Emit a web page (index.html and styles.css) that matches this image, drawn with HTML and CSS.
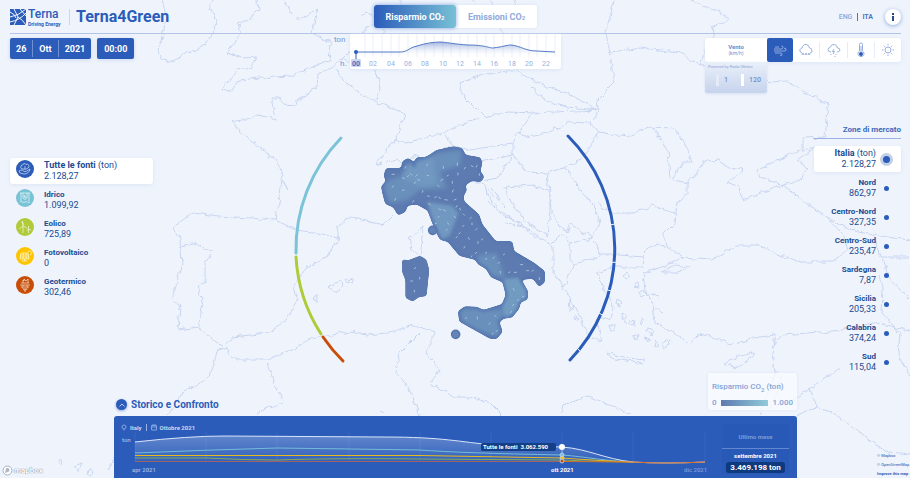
FILE: index.html
```html
<!DOCTYPE html>
<html lang="it">
<head>
<meta charset="utf-8">
<meta name="viewport" content="width=device-width, initial-scale=1">
<title>Terna4Green</title>
<link rel="stylesheet" href="styles.css">
</head>
<body>
<div class="app">
  <svg class="map" viewBox="0 0 910 478" preserveAspectRatio="xMidYMid slice" aria-hidden="true">
    <defs>
      <filter id="coast" x="0" y="0" width="910" height="478" filterUnits="userSpaceOnUse">
        <feTurbulence type="fractalNoise" baseFrequency="0.14" numOctaves="2" seed="4"/>
        <feDisplacementMap in="SourceGraphic" scale="6" xChannelSelector="R" yChannelSelector="G"/>
      </filter>
      <clipPath id="land"><use href="#italy"/></clipPath>
      <filter id="soft"><feGaussianBlur stdDeviation="5"/></filter>
      <filter id="round" color-interpolation-filters="sRGB"><feGaussianBlur stdDeviation="4"/><feComponentTransfer><feFuncA type="linear" slope="6" intercept="-2.5"/></feComponentTransfer></filter>
    </defs>
    <g class="coast" filter="url(#coast)">
      <path d="M162 0L167 18L163 32L162 43L158 48L163 60L172 62L187 53L203 47L213 33L217 20L210 5L213 0"/>
      <path d="M257 0L258 10L247 22L237 22L240 30L235 43L227 53L242 58L257 57L250 68L237 70L222 90L230 91L239 80L260 78L290 76L300 72L329 60L331 43L312 33L317 10L300 20L290 12L285 0"/>
      <path d="M400 0L400 10L405 20L385 17L366 27L351 50L341 60L327 70L318 75L317 87L298 100L297 105L282 104L279 98L272 98L276 119L257 115L250 118L232 122L238 130L253 142L267 152L280 167L282 177L288 190L282 180L279 203L275 220L250 218L218 216L193 213L174 226L180 240L182 263L172 300L180 307L178 330L198 327L213 340L223 347L232 337L268 333L287 320L298 300L293 288L307 267L327 257L339 238L337 227L350 217L383 225L393 215"/>
      <path d="M275 220L297 230L317 233L339 238M180 245L192 243L213 252L205 263L205 283L197 287L203 303L198 327"/>
      <path d="M168 415L183 392L205 380L213 367L218 350L228 347L227 353L237 360L267 360L297 348L307 340L320 337L350 332L367 335L386 333L415 325L435 333L425 353L440 370L430 383L454 397L470 397L490 403L502 415"/>
      <path d="M420 333L400 353L395 370L408 387L420 415M268 363L274 383L283 403L260 410L257 415M560 415L563 405L587 397L603 403L620 408L630 415"/>
      <path d="M328 287L340 281L343 285L337 293ZM347 279L353 280L351 283L346 281ZM313 299L317 295L317 302Z"/>
      <path d="M422 227L410 238L412 250L420 255L423 238Z"/>
      <path d="M336 67L343 80L363 95L377 102L405 113L398 133L395 140L386 150L376 165L383 163M376 70L381 87L377 100M341 60L365 63L376 70L385 45L383 20M395 140L405 143L444 133L452 145L469 150L513 143L518 133L533 113"/>
      <path d="M386 163L397 158L405 168L415 155L425 162L440 152L452 145"/>
      <path d="M491 0L501 30L508 43L513 67M459 83L484 75L513 70L548 87L567 93L598 110L533 113L508 112L484 117L464 97ZM479 117L459 125L444 133"/>
      <path d="M614 0L606 33L611 60L612 70L615 82L597 100L598 110L590 123L570 122L547 133L530 137L518 133M530 87L547 102L567 107L598 110M590 123L600 132L627 137L650 127L673 128L683 140L693 162L682 162L673 180L688 183M652 127L668 150L670 180M600 132L580 160L563 168L547 173L527 172L513 155L480 162M611 53L640 48L680 52L700 65L705 50L715 37L712 28L730 18L692 0M700 65L750 63L770 83L787 82L820 100L828 105L827 120L825 137L803 138L803 150"/>
      <path d="M513 143L513 155L497 178L477 182L485 185L487 195L503 215L530 230L553 247L553 273L563 287L573 303L580 317L590 337L602 343L597 320L610 317L613 307L597 273L613 267L643 267L645 250L657 243L668 247"/>
      <path d="M505 187L533 185L550 192L550 212L547 235L530 225L510 202ZM547 173L550 193L553 217L567 233L572 223L583 233L593 237L600 223L593 203L582 193L570 173L563 168"/>
      <path d="M597 203L613 213L633 213L653 206L675 213M593 240L600 255L620 255L643 257M570 243L593 238M552 243L562 233L570 243L570 260L575 264L600 256M563 287L573 267L575 264"/>
      <path d="M688 183L688 193L677 203L675 223L663 235L668 247L683 258L712 260L737 245L760 245L777 255L800 262L833 262L848 250L843 233L827 218L800 198L783 185L763 192L743 200L740 187L728 182L743 170L730 168L717 160L705 162L688 183"/>
      <path d="M783 185L760 177L757 170L777 160L803 150L815 147L797 160L807 168L800 180Z"/>
      <path d="M683 258L663 267L643 273L645 290L653 303L655 323L673 333L690 343L702 333L730 345L760 337L775 335L772 353L775 373L770 388L760 415M772 347L782 335L807 333L843 330L880 323L897 328L910 330"/>
      <path d="M662 272L675 265L690 267L678 272ZM725 363L737 357L755 352L743 365L733 368ZM608 353L627 358L645 360L643 364L610 358Z"/>
      <path d="M827 218L850 230L873 235L910 240M873 235L880 257L910 257M883 257L888 277L908 298M880 275L883 287L882 313L900 333L898 355L910 375"/>
      <path d="M840 368L810 389L793 400M810 389L817 408L797 415M817 408L832 412L888 453L910 455M775 371L781 378L776 395L770 410"/>
      <path d="M623 275l4-3 3 4-4 3zM634 283l5-1 1 4-4 1zM638 292l6-2 2 5-5 3zM617 300l5 3-2 4-4-2zM622 312l4 2-2 4-3-2zM630 320l5 1-1 5-4-1zM641 318l4 3-3 3zM648 328l6 2-2 5-5-3zM634 335l4 1-1 4-3-2zM645 337l5 1-2 4zM655 340l3 4-4 3zM610 325l5 2-3 5zM663 342l8-3-3 7-5 3zM570 300l4 5-5 6zM575 315l3 5-4-1z"/>
      <path d="M488 190l5 6M492 188l8 12M496 197l9 11M500 210l9 7M508 217l14 7M516 225l14 5M488 200l7 8M505 223l9 3M527 231l9 6M620 317l8 7M655 309l8 4M651 293l9 3M380 410l4 2"/>
      <path d="M58 459l4 2-1 4-3-2zM74 466l8-3-4 8zM88 470l5 1-2 5-4-2zM109 470l5-13M472 0L478 9L470 18L478 22M515 0L520 18L508 22M360 18L367 12L375 17"/>
    </g>

    <g class="italy" transform="translate(370 135) scale(.3333)">
      <g filter="url(#round)">
      <path id="italy" d="M50 102L95 102L100 80L115 72L128 82L132 95L140 70L160 70L175 65L200 48L250 37L275 42L285 62L330 70L334 85L328 110L340 125L332 138L305 135L283 150L288 165L278 182L280 200L325 240L335 270L375 320L425 322L430 350L490 385L522 410L522 440L508 452L490 428L450 432L472 470L470 492L450 500L445 520L425 545L400 548L385 560L395 590L378 610L360 608L310 580L270 558L267 530L285 517L320 518L340 528L398 510L410 480L400 440L365 425L350 400L325 385L318 372L270 360L235 318L212 312L203 295L190 265L175 225L140 205L110 210L105 228L85 238L72 215L48 205L40 175L36 155L50 140L44 120ZM98 375L115 378L150 364L168 375L176 405L168 482L145 485L128 498L108 488L108 435L98 410Z"/>
      <g clip-path="url(#land)">
        <path class="mid" filter="url(#soft)" d="M35 140L90 125L140 80L200 55L275 45L270 90L210 110L230 160L150 165L110 195L60 205Z"/>
        <path class="light" filter="url(#soft)" d="M110 90L190 65L200 150L150 155L95 130Z"/>
        <path class="light" d="M172 200L245 212L265 235L240 300L218 315L190 265Z"/>
        <path class="mid" filter="url(#soft)" d="M325 360L380 355L405 430L360 420L320 380ZM262 520L400 525L395 610L280 570Z"/>
        <path class="pale" d="M400 432L445 428L480 470L450 520L405 552L396 512L412 480Z"/>
      </g>
      <path class="rim" d="M50 102L95 102L100 80L115 72L128 82L132 95L140 70L160 70L175 65L200 48L250 37L275 42L285 62L330 70L334 85L328 110L340 125L332 138L305 135L283 150L288 165L278 182L280 200L325 240L335 270L375 320L425 322L430 350L490 385L522 410L522 440L508 452L490 428L450 432L472 470L470 492L450 500L445 520L425 545L400 548L385 560L395 590L378 610L360 608L310 580L270 558L267 530L285 517L320 518L340 528L398 510L410 480L400 440L365 425L350 400L325 385L318 372L270 360L235 318L212 312L203 295L190 265L175 225L140 205L110 210L105 228L85 238L72 215L48 205L40 175L36 155L50 140L44 120Z"/>
      </g>
      <circle class="isle" cx="188" cy="286" r="12"/>
      <circle class="isle" cx="257" cy="598" r="12"/>
      <path class="wind" d="M66 118h7M66 157l5-4M104 100l4-6M97 128l6 3M112 125l5-4M121 116l5 4M137 124l5-5M133 146l4-5M143 133l6 3M170 92l3-5M171 121l5 1M97 166l6-1M74 196l3-6M128 202l3-5M157 172l2-5M173 183l5 1M194 188l5-3M206 187l5 3M225 194l7 1M203 151l4 3M220 100v-6M212 137l7-4M231 123l4-2M247 145v-6M262 92v-8M264 120v-6M247 171l3-6M253 195l5-2M283 102l3-5M304 92l5 3M319 96l2-4M328 121v-5M258 217l3-5M176 206l5 3M206 222l7 2M220 224l7 4M204 248l3-4M252 243l5 5M236 268l-3-5M196 266l4-2M228 286l4-3M272 225l-3-5M284 241l-4-4M300 251l4-4M278 275l4-4M306 269v-5M317 285l4-4M267 297l3-4M298 313l-3-5M324 325v-5M258 308l4-3M282 339l2-4M316 356l4-4M304 366l2-4M334 315l4-3M346 355l4-3M347 374l3-4M369 370l4-4M384 385l5-3M400 360l4-3M391 415v-6M416 413l4-2M433 412h6M452 389h6M470 407h6M486 409l4-3M508 434v-6M433 466l-3-6M443 496l4-1M428 512l3-4M421 534l4-5M457 486l5-2M286 551l4-4M322 552v-6M357 568l3-4M374 542l4 3M366 598l3-4M378 590l4-3M133 401l4-3M149 432v-5M122 438h6M133 471v-5"/>
    </g>
    <g class="arc">
      <path class="a-cyan" d="M341 138A160 160 0 0 0 296 253"/>
      <path class="a-green" d="M296 257A160 160 0 0 0 321 334"/>
      <path class="a-orange" d="M323 337A160 160 0 0 0 343 361"/>
      <path class="a-blue" d="M568 136A160 160 0 0 1 570 360"/>
      <path class="a-gap" d="M610 225L617 223.500M611 262.300h8M606 289.500l7 2M598 312.500l6 3.500M576 347l5 5"/>
    </g>
  </svg>

  <header class="top">
    <div class="brand">
      <svg class="logo" width="53" height="22" viewBox="0 -3 53 22" role="img" aria-label="Terna Driving Energy">
        <path class="logo-box" d="M0 0H16V16H0Z"/>
        <path class="logo-cut" d="M0 8Q8 7 16 0M0 13Q10 11 16 4M4 0L8 8L4 16M10 0L16 7M8 8Q13 11 16 16M0 3Q5 5 6 9"/>
        <text class="logo-name" x="18" y="9">Terna</text>
        <text class="logo-sub" x="18" y="17">Driving Energy</text>
      </svg>
      <h1>Terna4Green</h1>
    </div>
    <nav class="tabs" aria-label="Indicatore">
      <button class="tab on" type="button">Risparmio CO<small>2</small></button>
      <button class="tab" type="button">Emissioni CO<small>2</small></button>
    </nav>
    <div class="lang">
      <a href="#eng">ENG</a><a class="current" href="#ita">ITA</a>
      <button class="info" type="button" aria-label="Informazioni">
        <svg width="4" height="8" viewBox="0 0 4 8"><path d="M1 0h2v2H1zM1 3h2v5H1z"/></svg>
      </button>
    </div>
  </header>

  <div class="tools">
    <div class="when">
      <div class="date"><button type="button">26</button><button type="button">Ott</button><button type="button">2021</button></div>
      <button class="time" type="button">00:00</button>
    </div>
    <svg class="hours" viewBox="0 0 211 35" role="img" aria-label="Tonnellate per ora">
      <defs><linearGradient id="hg" x1="0" y1="0" x2="0" y2="1"><stop offset="0" stop-color="#6384cb" stop-opacity=".6"/><stop offset="1" stop-color="#fff" stop-opacity="0"/></linearGradient></defs>
      <text x="-16" y="8" class="unit">ton</text><text x="-10" y="32" class="unit">h.</text>
      <path class="grid" d="M15 0V23M23 0V23M32 0V23M41 0V23M49 0V23M58 0V23M67 0V23M75 0V23M84 0V23M93 0V23M101 0V23M110 0V23M118 0V23M127 0V23M136 0V23M144 0V23M153 0V23M162 0V23M170 0V23M179 0V23M187 0V23M196 0V23M205 0V23"/>
      <path fill="url(#hg)" d="M6 18H50C58 18 58 14 67 12C76 9 84 8 91 8C101 9 104 10 118 11C135 11 139 14 143 14C152 13 157 11 161 11C171 12 175 17 187 17L205 18V23H6Z"/>
      <path class="line" d="M6 18H50C58 18 58 14 67 12C76 9 84 8 91 8C101 9 104 10 118 11C135 11 139 14 143 14C152 13 157 11 161 11C171 12 175 17 187 17L205 18"/>
      <path class="stem" d="M6 18V25"/><circle class="dot" cx="6" cy="18" r="2"/>
      <rect class="now" x="1" y="25" width="10" height="8" rx="1"/>
      <g class="h"><text class="sel" x="6" y="32">00</text><text x="23" y="32">02</text><text x="41" y="32">04</text><text x="58" y="32">06</text><text x="75" y="32">08</text><text x="93" y="32">10</text><text x="110" y="32">12</text><text x="127" y="32">14</text><text x="144" y="32">16</text><text x="162" y="32">18</text><text x="179" y="32">20</text><text x="196" y="32">22</text></g>
    </svg>
    <div class="weather">
      <div class="wbar">
        <div class="wname"><strong>Vento</strong><span>(km/h)</span></div>
        <button class="on" type="button" aria-label="Vento"><svg width="14" height="14" viewBox="0 0 14 14"><path d="M1 6H8Q10 6 10 4.500T8.500 3M1 8H12Q13.500 7.500 13 6T11 5.500M2 10H8Q9.500 10.500 9 12T7 12M2 4H6"/></svg></button>
        <button type="button" aria-label="Pioggia"><svg width="14" height="14" viewBox="0 0 14 14"><path d="M3 10Q0 9 1 6.500Q2 5 3 5Q4 1 7.500 1.500Q10 2 10.500 5Q13 5 13 8Q13 10 11 10M3 12l1-2 1 2M6 12l1-2 1 2M9 12l1-2 1 2"/></svg></button>
        <button type="button" aria-label="Temporale"><svg width="14" height="14" viewBox="0 0 14 14"><path d="M4 9Q1 9 1 6.500Q1 5 3 4.500Q4 1 7.500 1.500Q10 2 10.500 5Q13 5 13 7.500Q12 9 10 9M7 6L5.500 8.500H7.500L6 11M4 11v1M9 11v1M8 13v1"/></svg></button>
        <button type="button" aria-label="Temperatura"><svg width="8" height="16" viewBox="0 0 8 16"><path d="M2.500 9V2.500Q2.500 1 4 1T5.500 2.500V9A3 3 0 1 1 2.500 9M4 4V11"/><circle class="bulb" cx="4" cy="12" r="2"/></svg></button>
        <button type="button" aria-label="Sole"><svg width="14" height="14" viewBox="0 0 14 14"><circle cx="7" cy="7" r="3"/><path d="M7 1V2.500M7 11.500V13M1 7H2.500M11.500 7H13M2.800 2.800l1 1M10.200 10.200l1 1M2.800 11.200l1-1M10.200 3.800l1-1"/></svg></button>
      </div>
      <div class="wscale"><span class="credit">Powered by Radar Meteo</span><div><i></i><span>1</span><i class="strong"></i><span>120</span></div></div>
    </div>
  </div>

  <main class="stage">
    <ul class="sources">
      <li><button class="on" type="button"><svg viewBox="0 0 18 18"><circle fill="#2b5cba" cx="9" cy="9" r="9"/><path d="M3 11L5 10Q7 10 8 11.500H10L14 9Q13 14 8 14L4 13ZM7 9A2 2 0 1 1 6.500 5A2 2 0 0 1 10 4.500A2 2 0 1 1 12 8Q10 10 7 9M9 9V6"/></svg><span><b>Tutte le fonti <em>(ton)</em></b>2.128,27</span></button></li>
      <li><button type="button"><svg viewBox="0 0 18 18"><circle fill="#78c3d5" cx="9" cy="9" r="9"/><path d="M4 4H14M5 4V12M13 4V12M7 4V9Q9 12 11 9V4M9 6L8 8H10L9 9M4 13Q5 12 6.500 13T9 13T11.500 13T14 13"/></svg><span><b>Idrico</b>1.099,92</span></button></li>
      <li><button type="button"><svg viewBox="0 0 18 18"><circle fill="#afcb37" cx="9" cy="9" r="9"/><path d="M7 8V15M7 8L6 3L8 7M7 8L3 11M7 8L11 10M12.500 11V15M12.500 11V8M12.500 11L10.500 13M12.500 11L15 12"/></svg><span><b>Eolico</b>725,89</span></button></li>
      <li><button type="button"><svg viewBox="0 0 18 18"><circle fill="#fdc500" cx="9" cy="9" r="9"/><path d="M5 6H12L13 12H4ZM7.500 6L7 12M10 6V12M4.500 8H12.500M4 10H13M8.500 12V14M6 14H11M12 5A2 2 0 1 1 14 8"/></svg><span><b>Fotovoltaico</b>0</span></button></li>
      <li><button type="button"><svg viewBox="0 0 18 18"><circle fill="#c84e08" cx="9" cy="9" r="9"/><path d="M5 7H13M7 7V4L8 5V3L10 5L12 3V7M4 9H14M7 9V12Q7 14 9 14T11 12V9M5 11H7M11 11H13M9 10V16"/></svg><span><b>Geotermico</b>302,46</span></button></li>
    </ul>

    <section class="zones">
      <h2>Zone di mercato</h2>
      <ul>
        <li><button class="on" type="button"><span><b>Italia <em>(ton)</em></b>2.128,27</span><i></i></button></li>
        <li><button type="button"><span><b>Nord</b>862,97</span><i></i></button></li>
        <li><button type="button"><span><b>Centro-Nord</b>327,35</span><i></i></button></li>
        <li><button type="button"><span><b>Centro-Sud</b>235,47</span><i></i></button></li>
        <li><button type="button"><span><b>Sardegna</b>7,87</span><i></i></button></li>
        <li><button type="button"><span><b>Sicilia</b>205,33</span><i></i></button></li>
        <li><button type="button"><span><b>Calabria</b>374,24</span><i></i></button></li>
        <li><button type="button"><span><b>Sud</b>115,04</span><i></i></button></li>
      </ul>
    </section>

    <section class="dock">
      <div class="dockhead">
        <h2><button type="button" aria-label="Chiudi"><svg width="6" height="4" viewBox="0 0 6 4"><path d="M.5 3.500L3 1L5.500 3.500"/></svg></button>Storico e Confronto</h2>
        <div class="legend"><span>Risparmio CO<sub>2</sub> (ton)</span><div><span>0</span><i></i><span>1.000</span></div></div>
      </div>
      <div class="panel">
        <div class="history">
          <p><svg width="6" height="7" viewBox="0 0 6 7"><circle cx="3" cy="3" r="2"/><path d="M3 5V6.500"/></svg>Italy<span class="sep"></span><svg width="6" height="7" viewBox="0 0 6 7"><path d="M.5 1.500H5.500V6H.5ZM.5 3H5.500M2 0V1.500M4 0V1.500"/></svg>Ottobre 2021</p>
          <svg class="chart" viewBox="0 16 600 46" role="img" aria-label="Storico mensile">
            <defs><linearGradient id="pg" x1="0" y1="0" x2="0" y2="1"><stop offset="0" stop-color="#fff" stop-opacity=".25"/><stop offset="1" stop-color="#fff" stop-opacity=".03"/></linearGradient></defs>
            <text class="t-ton" x="8" y="26">ton</text>
            <path class="months" d="M21 16V46M92 16V46M163 16V46M235 16V46M306 16V46M377 16V46M448 16V46M519 16V46M591 16V46"/>
            <path fill="url(#pg)" d="M21 26Q75 20 110 20L270 21C330 21 345 26 380 29L448 31C475 33 490 43 519 46H21Z"/>
            <path stroke="#75bcd8" d="M21 37Q90 34 163 32Q240 33 306 34Q345 37 448 39C475 41 490 45 519 46"/>
            <path stroke="#86aa5c" d="M21 42H92Q130 44 163 44Q220 42 306 43L448 44Q490 46 519 46"/>
            <path stroke="#e7ba19" d="M21 39.500H306L448 42Q490 45 519 46"/>
            <path stroke="#a36362" d="M21 45.500H448"/>
            <path stroke="#d8e4fa" d="M21 26Q75 20 110 20L270 21C330 21 345 26 380 29L448 31C475 33 490 43 519 46Q550 48 591 46"/>
            <path stroke="#d9701f" d="M448 45.500L519 46Q550 48 591 46"/>
            <path stroke="#9db9ea" d="M448 28V46"/>
            <rect class="tipbox" x="367" y="27" width="75" height="8" rx="2"/>
            <text class="tip" x="369" y="33">Tutte le fonti&#160; 3.062.590</text>
            <circle cx="448" cy="31" r="3" fill="#fff"/><circle class="ring" cx="448" cy="39" r="2" fill="#73c2d8"/><circle class="ring" cx="448" cy="42" r="2" fill="#fdc500"/><circle class="ring" cx="448" cy="45" r="2" fill="#c84e08"/>
            <text class="m" x="18" y="56">apr 2021</text><text class="m cur" x="437" y="56">ott 2021</text><text class="m dim" x="570" y="56">dic 2021</text>
          </svg>
        </div>
        <aside class="last"><span>Ultimo mese</span><b>settembre 2021</b><strong>3.469.198 ton</strong></aside>
      </div>
    </section>
    <div class="mapbox"><svg width="11" height="11" viewBox="0 0 11 11"><circle cx="5.500" cy="5.500" r="4.500"/><circle class="in" cx="5.500" cy="5" r="2"/><path d="M3 8L4 5L6 7Z"/></svg>mapbox</div>
    <div class="credits"><a href="#mapbox">© Mapbox</a><a href="#osm">© OpenStreetMap</a><a class="strong" href="#improve">Improve this map</a></div>
  </main>
</div>
</body>
</html>
```
FILE: styles.css
```css
* { box-sizing: border-box; }
body {
  margin: 0;
  background: #eff4fc;
  color: #204b91;
  font-family: Roboto, "Liberation Sans", sans-serif;
  font-size: 9px;
  overflow: hidden;
}
button { border: 0; padding: 0; background: none; color: inherit; font: inherit; cursor: pointer; }
a { color: inherit; text-decoration: none; }
ul { list-style: none; margin: 0; padding: 0; }
h1, h2, p { margin: 0; }
svg { display: block; flex: none; }
.app {
  position: relative;
  display: flex;
  flex-direction: column;
  height: 100vh;
  padding: 0 9px 0 10px;
}

/* map */
.map { position: absolute; inset: 0; width: 100%; height: 100%; z-index: -1; }
.coast { fill: none; stroke: #c8d5f0; stroke-width: 1; }
.italy { stroke-linejoin: round; stroke-linecap: round; }
#italy { fill: #5d7bb0; stroke: #5d7bb0; stroke-width: 4; }
.mid { fill: #698fbb; }
.light { fill: #7098c0; }
.pale { fill: #729bc2; }
.rim { fill: none; stroke: #5676b1; stroke-width: 6; }
.isle { fill: #6384b6; stroke: #5878b1; stroke-width: 5; }
.wind { fill: none; stroke: #a3c1db; stroke-width: 3; }
.arc { fill: none; stroke-width: 3; stroke-linecap: round; }
.a-cyan { stroke: #7bc3d6; }
.a-green { stroke: #afcb37; }
.a-orange { stroke: #c84e08; }
.a-blue { stroke: #2b5cba; }
.a-gap { stroke: #eff4fc; stroke-width: 1; stroke-linecap: butt; }

/* header */
.top, .tools { display: grid; grid-template-columns: 1fr auto 1fr; }
.top { align-items: center; height: 34px; border-bottom: 1px solid #b2c3e6; }
.brand { display: flex; align-items: center; gap: 6px; }
.brand h1 { padding-left: 6px; border-left: 1px solid #cbd7ee; color: #2b5cba; font-size: 16px; line-height: 16px; font-weight: 700; }
.logo-box, .logo-name, .logo-sub { fill: #2b5cba; }
.logo-cut { fill: none; stroke: #eff4fc; stroke-width: 1; }
.logo-name { font: 500 12px Roboto, sans-serif; }
.logo-sub { font: 700 5px Roboto, sans-serif; }
.tabs { display: flex; background: #fff; border-radius: 3px; box-shadow: 0 0 4px #dbe4f5; }
.tab { height: 23px; width: 81px; color: #8fa9dc; font-size: 9px; font-weight: 700; border-radius: 3px; }
.tab.on { width: 82px; color: #fff; background: linear-gradient(90deg, #2b5cba, #78c0d5); box-shadow: 0 0 4px #8caade; }
.tab small { font-size: 6px; }
.lang { display: flex; align-items: center; justify-content: flex-end; color: #8ca7da; font-size: 7px; font-weight: 500; line-height: 8px; }
.lang .current { margin-left: 5px; padding-left: 4px; border-left: 1px solid #4d74c1; color: #4d74c1; font-weight: 700; }
.info { display: grid; place-items: center; width: 16px; height: 16px; margin-left: 12px; border-radius: 50%; background: #fff; box-shadow: 0 1px 4px #8eaade; }
.info path { fill: #2b4c82; }

/* tools */
.tools { align-items: start; height: 60px; }
.when { display: flex; gap: 6px; padding-top: 4px; color: #fff; font-weight: 700; }
.date, .time { height: 21px; background: #2b5cba; border-radius: 2px; box-shadow: 0 1px 4px #ccd8ef; }
.date { display: flex; align-items: center; }
.date button { height: 17px; padding: 0 6px; }
.date button + button { border-left: 1px solid #6e91d2; }
.time { width: 37px; }
.hours { width: 211px; overflow: visible; background: #fff; border-radius: 0 0 3px 3px; box-shadow: 0 1px 4px #dbe4f5; }
.unit { fill: #8fa8da; font-size: 8px; font-weight: 500; }
.grid { stroke: #eaeff9; stroke-width: 1; }
.line { fill: none; stroke: #567cc7; stroke-width: 1; }
.stem { stroke: #2b5cba; }
.dot { fill: #2b5cba; }
.now { fill: #ccd8ee; }
.h { fill: #98afdb; font-size: 7px; text-anchor: middle; }
.h .sel { fill: #466fbd; font-weight: 700; }
.weather { justify-self: end; width: 196px; padding-top: 4px; }
.wbar { display: flex; height: 24px; background: #fff; border-radius: 3px; box-shadow: 0 1px 4px #dbe4f5; }
.wname { display: flex; flex-direction: column; align-items: center; justify-content: center; width: 62px; color: #6c8dce; font-size: 6px; line-height: 7px; }
.wname span { font-size: 5px; }
.wbar button { display: grid; place-items: center; flex: 1; margin: 4px 0; border-left: 1px solid #e7edf8; }
.wbar button.on, .wbar button.on + button { border-left: 0; }
.wbar button.on { margin: 0; background: #2b5cba; border-radius: 2px; }
.wbar svg { fill: none; stroke: #7f9cd5; stroke-width: .8; }
.wbar .on svg { stroke: #a7bfe9; }
.wbar .bulb { fill: #2b5cba; stroke: none; }
.wscale { width: 62px; height: 31px; padding: 2px 3px; border-radius: 2px; color: #7290cc; background: linear-gradient(#eaf0fa, #c6d3ec); box-shadow: 0 1px 3px #d6e0f2; }
.credit { display: block; font-size: 4px; line-height: 6px; color: #8fa6d8; }
.wscale div { display: flex; align-items: center; justify-content: flex-end; height: 19px; padding-right: 3px; font-size: 7px; font-weight: 500; }
.wscale i { width: 3px; height: 12px; margin-right: 5px; background: #e6ecf7; }
.wscale i.strong { margin-left: 13px; background: #fff; }

/* stage */
.stage { display: grid; flex: 1; min-height: 0; grid-template: 1fr auto / 104px 1fr 104px; }
b { display: block; font-size: 8px; font-weight: 700; }
em { font-style: normal; font-weight: 400; }
.sources { grid-area: 1 / 1 / 2 / 3; width: 143px; padding-top: 64px; }
.sources li { height: 29px; }
.sources button { display: flex; align-items: flex-start; gap: 10px; width: 100%; height: 26px; padding: 2px 0 0 6px; border-radius: 3px; text-align: left; line-height: 11px; }
.sources .on, .zones .on { background: #fff; box-shadow: 0 1px 4px #dbe4f5; }
.on b { font-size: 9px; }
.sources svg { width: 18px; height: 18px; }
.sources path { fill: none; stroke: #fff; stroke-width: .7; opacity: .85; }
.zones { grid-area: 1 / 3 / 3 / 4; padding-left: 17px; text-align: right; }
.zones h2 { margin: 29px 0 7px; padding-bottom: 2px; border-bottom: 1px solid #9bb3e0; color: #3c69bd; font-size: 8px; line-height: 13px; font-weight: 700; white-space: nowrap; }
.zones li { height: 29px; }
.zones button { display: flex; align-items: center; justify-content: flex-end; gap: 4px; width: 100%; height: 26px; padding-right: 7px; border-radius: 3px; text-align: right; line-height: 11px; }
.zones i { width: 5px; height: 5px; margin: 0 5px 0 4px; border-radius: 50%; background: #2b5cba; }
.zones .on i { width: 7px; height: 7px; margin: 0 4px 0 3px; box-shadow: 0 0 0 3px #c3cfe3; }

/* dock */
.dock { grid-area: 2 / 2; }
.dockhead { display: flex; justify-content: space-between; align-items: flex-end; margin-bottom: 6px; }
.dockhead h2 { display: flex; align-items: center; gap: 4px; color: #2b5cba; font-size: 10px; line-height: 10px; }
.dockhead button { display: grid; place-items: center; width: 11px; height: 11px; margin-left: 2px; border-radius: 50%; background: #2b5cba; box-shadow: 0 1px 3px #8eaade; }
.dockhead button path { fill: none; stroke: #b9cdf0; }
.legend { width: 89px; height: 37px; padding: 7px 4px 0; border-radius: 2px; background: #f8fafecc; box-shadow: 0 0 4px #dfe7f5; color: #87a2d5; font-size: 8px; line-height: 13px; font-weight: 500; white-space: nowrap; }
.legend > span { display: block; height: 16px; }
.legend sub { font-size: 6px; line-height: 1px; }
.legend div { display: flex; align-items: center; justify-content: space-between; }
.legend i { width: 47px; height: 6px; background: linear-gradient(90deg, #5d7bb0, #91cbd9); }
.panel { display: grid; grid-template-columns: 1fr 67px; gap: 8px; height: 62px; padding-right: 8px; border-radius: 3px 3px 0 0; background: #2b5cba; color: #c9d8f3; }
.history p { display: flex; align-items: center; gap: 3px; height: 16px; padding: 7px 0 0 7px; font-size: 6px; font-weight: 700; }
.history p svg { fill: none; stroke: #83a3df; }
.sep { width: 1px; height: 7px; margin: 0 1px; background: #9cb5e5; }
.chart { width: 100%; fill: none; stroke-width: 1; }
.months { stroke: #3867c0; }
.chart text { font-size: 6px; font-weight: 500; fill: #a6bde8; }
.chart .cur, .chart .tip { fill: #fff; font-weight: 700; }
.chart .dim { fill: #7c9cdb; }
.tipbox { fill: #123f85; }
.ring { stroke: #b4cbe8; stroke-width: 1; }
.last { display: flex; flex-direction: column; align-items: center; margin-top: 8px; height: 50px; background: #2859b6; color: #7b9bdb; font-size: 6px; font-weight: 500; }
.last span { display: grid; place-items: center; width: 100%; height: 25px; border-bottom: 1px solid #6288cf; font-weight: 700; }
.last b { color: #fff; font-size: 6px; line-height: 13px; }
.last strong { padding: 0 4px; border-radius: 3px; background: #0d397e; color: #fff; font-size: 8px; line-height: 11px; white-space: nowrap; }
.mapbox { display: flex; align-items: center; align-self: end; gap: 1px; grid-area: 2 / 1; margin: 0 0 2px -8px; color: #fff; font-size: 8px; line-height: 11px; font-weight: 700; text-shadow: 0 0 1px #7d8ba3, 0 0 1px #7d8ba3; }
.mapbox circle { fill: #fff; stroke: #a7b0c0; }
.mapbox .in, .mapbox path { fill: #aeb7c7; stroke: none; }
.credits { display: flex; flex-direction: column; align-self: end; grid-area: 2 / 3; margin: 0 -9px 0 80px; color: #5579bd; font-size: 4px; line-height: 9px; font-weight: 500; white-space: nowrap; }
.credits .strong { color: #2b5cba; font-weight: 700; }
```
